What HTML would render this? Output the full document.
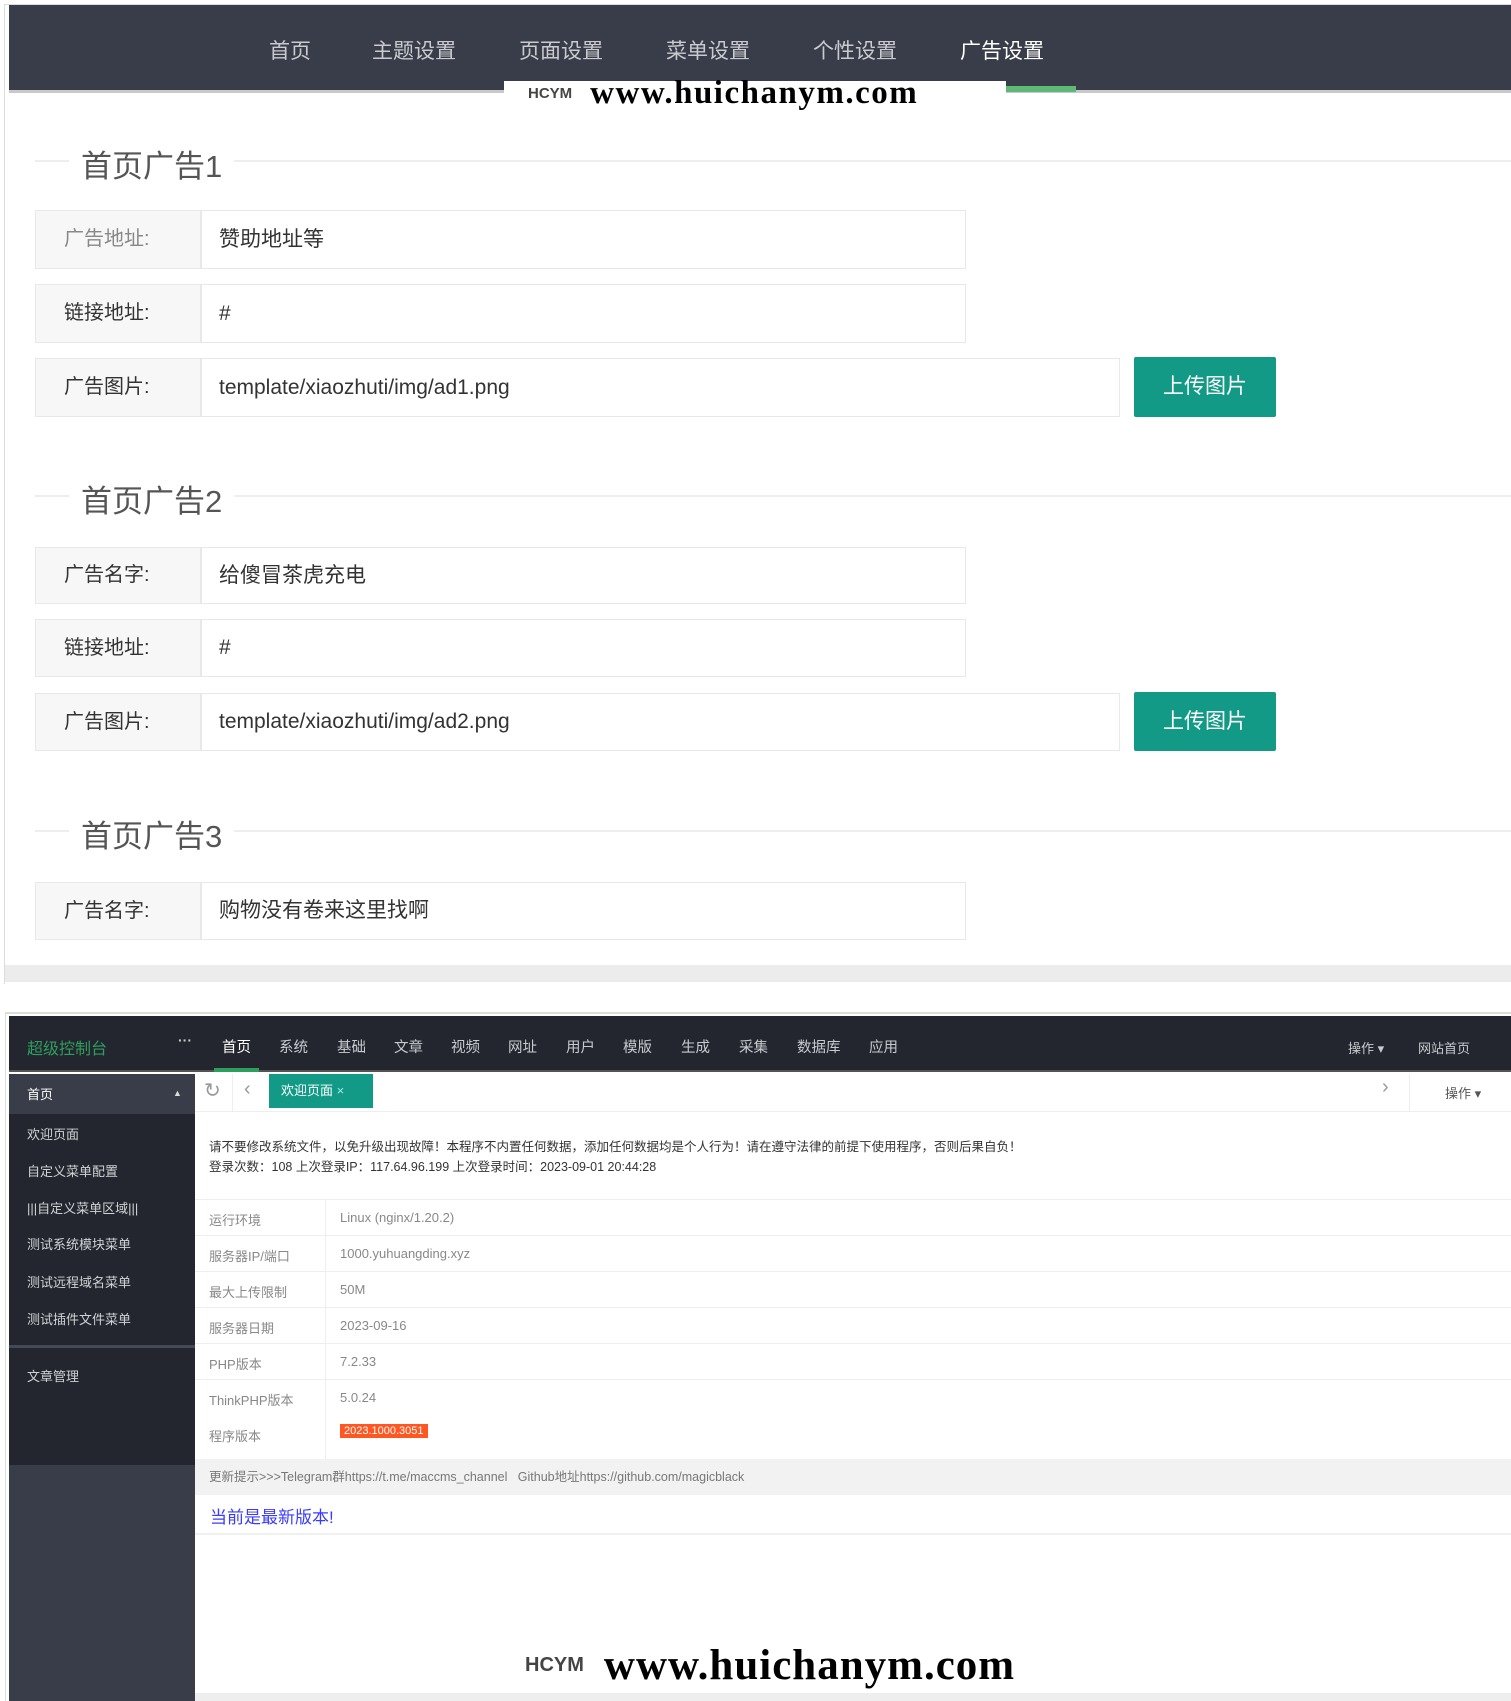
<!DOCTYPE html>
<html><head><meta charset="utf-8"><style>
*{margin:0;padding:0;box-sizing:border-box}
body{width:1511px;height:1701px;background:#fff;position:relative;overflow:hidden;font-family:"Liberation Sans","Noto Sans CJK SC",sans-serif}
.a{position:absolute}
.nav{color:#c9cbd0;font-size:21px;top:35px}
.sec{font-size:31px;color:#555;left:81px}
.line{height:2px;background:#eee}
.lab{left:35px;width:166px;background:#f7f7f7;border:1px solid #e8e8e8;font-size:20px;color:#333;padding-left:28px}
.inp{left:201px;border:1px solid #e8e8e8;font-size:21px;color:#333;padding-left:17px;background:#fff}
.btn{left:1134px;width:142px;background:#129a87;color:#fff;font-size:21px;text-align:center;border-radius:2px}
.wm{background:#fff;font-family:"Liberation Serif",serif;color:#000;display:flex;align-items:center}
.side{color:#d0d2d6;font-size:13px;left:27px}
.tn{color:#c8cad0;font-size:14.5px;top:1036px}
.row{left:195px;width:1316px;height:36px;border-bottom:1px solid #eee;font-size:13px;color:#888}
.row span{position:absolute;top:10px}
</style></head><body>
<div class="a" style="left:4px;top:4px;width:1507px;height:980px;border-left:1px solid #ddd;border-top:1px solid #ddd"></div>
<div class="a" style="left:9px;top:5px;width:1502px;height:88px;background:#393d49;border-bottom:3px solid #c9c9c9"></div>
<div class="a nav" style="left:269px">首页</div>
<div class="a nav" style="left:372px">主题设置</div>
<div class="a nav" style="left:519px">页面设置</div>
<div class="a nav" style="left:666px">菜单设置</div>
<div class="a nav" style="left:813px">个性设置</div>
<div class="a nav" style="left:960px;color:#fff">广告设置</div>
<div class="a" style="left:960px;top:86px;width:116px;height:6px;background:#5fb878"></div>
<div class="a wm" style="left:504px;top:81px;width:502px;height:25px;font-size:33px"><span style="font-family:'Liberation Sans';font-size:15px;font-weight:bold;color:#444;margin:0 18px 0 24px">HCYM</span><b style="letter-spacing:1.5px">www.huichanym.com</b></div>

<div class="a line" style="left:35px;top:160px;width:1476px"></div>
<div class="a sec" style="top:141px;background:#fff;padding:0 12px;left:69px">首页广告1</div>
<div class="a lab" style="top:210px;height:59px;line-height:57px;color:#888">广告地址:</div>
<div class="a inp" style="top:210px;width:765px;height:59px;line-height:57px">赞助地址等</div>
<div class="a lab" style="top:284px;height:59px;line-height:57px">链接地址:</div>
<div class="a inp" style="top:284px;width:765px;height:59px;line-height:57px">#</div>
<div class="a lab" style="top:358px;height:59px;line-height:57px">广告图片:</div>
<div class="a inp" style="top:358px;width:919px;height:59px;line-height:57px">template/xiaozhuti/img/ad1.png</div>
<div class="a btn" style="top:357px;height:60px;line-height:60px">上传图片</div>

<div class="a line" style="left:35px;top:495px;width:1476px"></div>
<div class="a sec" style="top:476px;background:#fff;padding:0 12px;left:69px">首页广告2</div>
<div class="a lab" style="top:547px;height:57px;line-height:55px">广告名字:</div>
<div class="a inp" style="top:547px;width:765px;height:57px;line-height:55px">给傻冒茶虎充电</div>
<div class="a lab" style="top:619px;height:58px;line-height:56px">链接地址:</div>
<div class="a inp" style="top:619px;width:765px;height:58px;line-height:56px">#</div>
<div class="a lab" style="top:693px;height:58px;line-height:56px">广告图片:</div>
<div class="a inp" style="top:693px;width:919px;height:58px;line-height:56px">template/xiaozhuti/img/ad2.png</div>
<div class="a btn" style="top:692px;height:59px;line-height:59px">上传图片</div>

<div class="a line" style="left:35px;top:830px;width:1476px"></div>
<div class="a sec" style="top:811px;background:#fff;padding:0 12px;left:69px">首页广告3</div>
<div class="a lab" style="top:882px;height:58px;line-height:56px">广告名字:</div>
<div class="a inp" style="top:882px;width:765px;height:58px;line-height:56px">购物没有卷来这里找啊</div>
<div class="a" style="left:5px;top:965px;width:1506px;height:17px;background:#ececec"></div>

<!-- bottom -->
<div class="a" style="left:5px;top:1012px;width:1506px;height:689px;border-left:1px solid #ddd;border-top:2px solid #ddd"></div>
<div class="a" style="left:9px;top:1016px;width:1502px;height:56px;background:#23262e;border-bottom:2px solid #555"></div>
<div class="a" style="left:27px;top:1035px;color:#2e9e5e;font-size:16px">超级控制台</div>
<div class="a" style="left:178px;top:1032px;color:#ccc;font-size:14px;font-weight:bold">···</div>
<div class="a tn" style="left:222px;color:#fff">首页</div>
<div class="a" style="left:214px;top:1068px;width:45px;height:4px;background:#2e9e5e"></div>
<div class="a tn" style="left:279px">系统</div><div class="a tn" style="left:337px">基础</div><div class="a tn" style="left:394px">文章</div><div class="a tn" style="left:451px">视频</div><div class="a tn" style="left:508px">网址</div><div class="a tn" style="left:566px">用户</div><div class="a tn" style="left:623px">模版</div><div class="a tn" style="left:681px">生成</div><div class="a tn" style="left:739px">采集</div><div class="a tn" style="left:797px">数据库</div><div class="a tn" style="left:869px">应用</div>
<div class="a tn" style="left:1348px;font-size:13px;top:1038px">操作 ▾</div>
<div class="a tn" style="left:1418px;font-size:13px;top:1038px">网站首页</div>

<div class="a" style="left:9px;top:1074px;width:186px;height:627px;background:#393d49"></div>
<div class="a" style="left:9px;top:1074px;width:186px;height:391px;background:#23262e"></div>
<div class="a" style="left:9px;top:1074px;width:186px;height:40px;background:#393d49"></div>
<div class="a side" style="top:1084px;color:#fff">首页</div>
<div class="a" style="left:173px;top:1088px;color:#ddd;font-size:9px">▲</div>
<div class="a side" style="top:1124px">欢迎页面</div>
<div class="a side" style="top:1161px">自定义菜单配置</div>
<div class="a side" style="top:1198px">|||自定义菜单区域|||</div>
<div class="a side" style="top:1234px">测试系统模块菜单</div>
<div class="a side" style="top:1272px">测试远程域名菜单</div>
<div class="a side" style="top:1309px">测试插件文件菜单</div>
<div class="a" style="left:9px;top:1345px;width:186px;height:3px;background:#444a55"></div>
<div class="a side" style="top:1366px">文章管理</div>

<div class="a" style="left:195px;top:1074px;width:1316px;height:38px;border-bottom:1px solid #eee;background:#fff"></div>
<div class="a" style="left:204px;top:1078px;color:#999;font-size:20px">↻</div>
<div class="a" style="left:244px;top:1078px;color:#999;font-size:20px">‹</div>
<div class="a" style="left:232px;top:1074px;width:1px;height:38px;background:#eee"></div>
<div class="a" style="left:269px;top:1074px;width:104px;height:34px;background:#129a87;color:#fff;font-size:13px;line-height:34px;padding-left:12px">欢迎页面 <span style="color:#9ed">×</span></div>
<div class="a" style="left:1382px;top:1076px;color:#999;font-size:20px">›</div>
<div class="a" style="left:1409px;top:1074px;width:1px;height:38px;background:#eee"></div>
<div class="a" style="left:1445px;top:1083px;color:#555;font-size:13px">操作 ▾</div>

<div class="a" style="left:209px;top:1137px;font-size:12.5px;color:#333;line-height:20px">请不要修改系统文件，以免升级出现故障！本程序不内置任何数据，添加任何数据均是个人行为！请在遵守法律的前提下使用程序，否则后果自负！<br>登录次数：108 上次登录IP：117.64.96.199 上次登录时间：2023-09-01 20:44:28</div>
<div class="a" style="left:195px;top:1199px;width:1316px;height:1px;background:#eee"></div>
<div class="a" style="left:325px;top:1200px;width:1px;height:259px;background:#eee"></div>
<div class="a row" style="top:1200px"><span style="left:14px">运行环境</span><span style="left:145px">Linux (nginx/1.20.2)</span></div>
<div class="a row" style="top:1236px"><span style="left:14px">服务器IP/端口</span><span style="left:145px">1000.yuhuangding.xyz</span></div>
<div class="a row" style="top:1272px"><span style="left:14px">最大上传限制</span><span style="left:145px">50M</span></div>
<div class="a row" style="top:1308px"><span style="left:14px">服务器日期</span><span style="left:145px">2023-09-16</span></div>
<div class="a row" style="top:1344px"><span style="left:14px">PHP版本</span><span style="left:145px">7.2.33</span></div>
<div class="a row" style="top:1380px;border:0"><span style="left:14px">ThinkPHP版本</span><span style="left:145px">5.0.24</span></div>
<div class="a row" style="top:1416px;height:43px;border:0"><span style="left:14px">程序版本</span><span style="left:145px;top:8px;background:#ff5722;color:#fff;font-size:11px;padding:1px 4px">2023.1000.3051</span></div>
<div class="a" style="left:195px;top:1459px;width:1316px;height:36px;background:#f2f2f2;font-size:12.5px;color:#777;line-height:36px;padding-left:14px">更新提示>>>Telegram群https://t.me/maccms_channel &nbsp; Github地址https://github.com/magicblack</div>
<div class="a" style="left:210px;top:1503px;color:#3b3bff;font-size:17px">当前是最新版本!</div>
<div class="a" style="left:195px;top:1533px;width:1316px;height:2px;background:#f0f0f0"></div>
<div class="a wm" style="left:505px;top:1640px;width:520px;height:50px;font-size:43px;background:transparent"><span style="font-family:'Liberation Sans';font-size:20px;font-weight:bold;color:#444;margin:0 20px 0 20px">HCYM</span><b style="letter-spacing:1px">www.huichanym.com</b></div>
<div class="a" style="left:195px;top:1693px;width:1316px;height:8px;background:#eee"></div>
</body></html>
